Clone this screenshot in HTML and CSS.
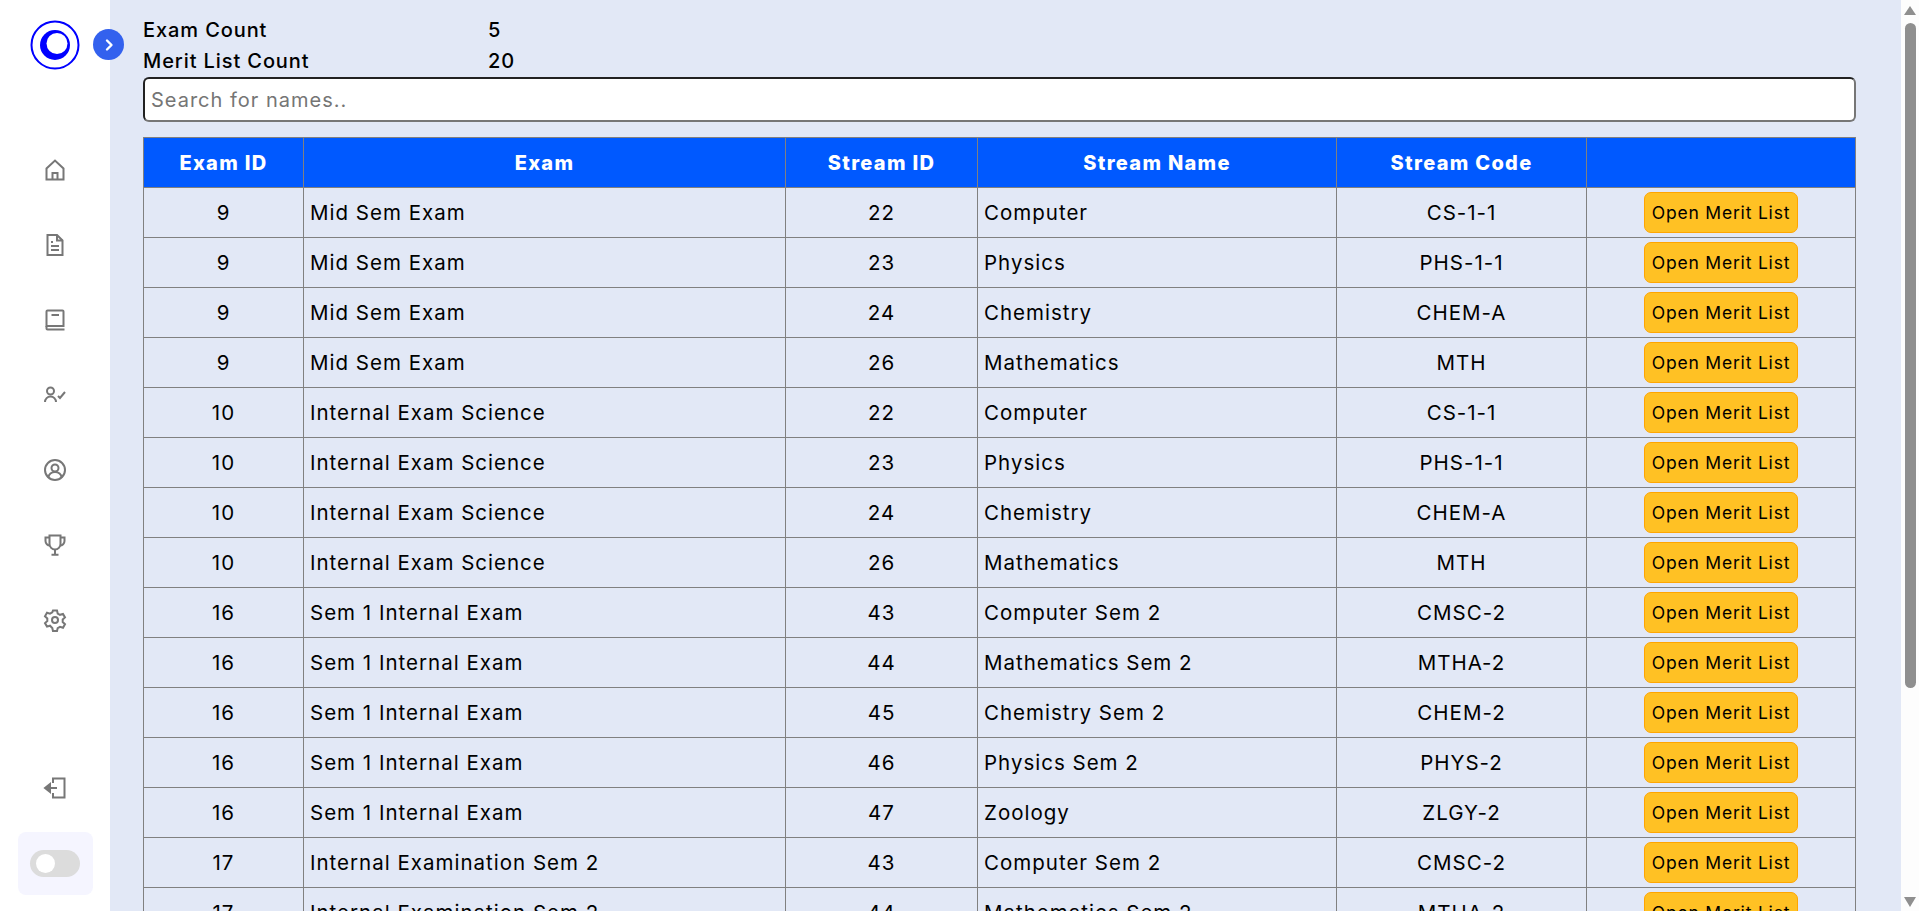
FILE: index.html
```html
<!DOCTYPE html>
<html lang="en">
<head>
    <meta charset="UTF-8">
    <meta name="viewport" content="width=device-width, initial-scale=1.0">
    <title>Merit List</title>
    <link rel="stylesheet" href="styles.css">
</head>
<body>
    <div class="layout">
        <aside class="sidebar">
            <div class="logo">
                <svg width="50" height="50" viewBox="0 0 50 50">
                    <circle cx="25" cy="25" r="23.5" fill="none" stroke="#0000ff" stroke-width="2"/>
                    <circle cx="25" cy="25" r="15" fill="#0000ff"/>
                    <circle cx="27" cy="23.5" r="10.5" fill="#fff"/>
                </svg>
            </div>
            <button class="toggle-btn">
                <svg width="16" height="16" viewBox="0 0 16 16"><path d="M6 3.500 10.500 8 6 12.500" fill="none" stroke="#fff" stroke-width="2.400" stroke-linecap="round" stroke-linejoin="round"/></svg>
            </button>
            <nav class="nav">
                <a class="nav-item"><svg class="icon" viewBox="0 0 24 24"><path d="M3.5 21.5V10.500L12 2.500l8.500 8v11z"/><path d="M9.5 21.500V15h5v6.500"/></svg></a>
                <a class="nav-item"><svg class="icon" viewBox="0 0 24 24"><path d="M4.500 2H14l5.500 5.500V22h-15z"/><path d="M14 2v5.500h5.500"/><path d="M8 9h2M8 13h8M8 17h8"/></svg></a>
                <a class="nav-item"><svg class="icon" viewBox="0 0 24 24"><path d="M3.500 18V3.500a1 1 0 0 1 1-1h15a1 1 0 0 1 1 1V18z"/><path d="M3.500 18v2.500a1 1 0 0 0 1 1h17"/><path d="M8.500 7H16"/></svg></a>
                <a class="nav-item"><svg class="icon" viewBox="0 0 24 24"><circle cx="7.500" cy="8" r="3.500"/><path d="M2 19a5.500 5.500 0 0 1 11 0"/><path d="M15 13l2 2 5-6"/></svg></a>
                <a class="nav-item"><svg class="icon" viewBox="0 0 24 24"><circle cx="12" cy="12" r="10"/><circle cx="12" cy="10" r="3.500"/><path d="M5.500 19.500a6.500 5.500 0 0 1 13 0"/></svg></a>
                <a class="nav-item"><svg class="icon" viewBox="0 0 24 24"><path d="M6.500 2.500h11V11a5.500 5.500 0 0 1-11 0z"/><path d="M6.500 4.500h-4V8A4.500 4.500 0 0 0 7 12.500M17.500 4.500h4V8a4.500 4.500 0 0 1-4.500 4.500"/><path d="M12 16.500v5M8.500 21.800h7"/></svg></a>
                <a class="nav-item"><svg class="icon" viewBox="0 0 24 24"><circle cx="12" cy="12" r="3"/><path d="M10 2.500h4l.7 3 2.300 1.300 3-.9 2 3.500-2.300 2.100v2.600l2.300 2.100-2 3.500-3-.9-2.300 1.300-.7 3h-4l-.7-3L7 17.700l-3 .9-2-3.500 2.300-2.100v-2.600L2 8.300l2-3.500 3 .9 2.300-1.300z"/></svg></a>
            </nav>
            <a class="nav-item logout"><svg class="icon" viewBox="0 0 24 24"><path d="M10 7V2.500h11.500v19H10V17"/><path d="M14 12H6"/><path d="M7 8l-5 4 5 4z" fill="#777"/></svg></a>
            <div class="theme-box">
                <div class="switch"><span class="knob"></span></div>
            </div>
        </aside>
        <main class="content">
            <div class="counts">
                <div class="count-row"><span class="count-label">Exam Count</span><span>5</span></div>
                <div class="count-row"><span class="count-label">Merit List Count</span><span>20</span></div>
            </div>
            <input class="search" type="text" placeholder="Search for names..">
            <table class="merit-table">
                <thead>
                    <tr>
                        <th>Exam ID</th>
                        <th>Exam</th>
                        <th>Stream ID</th>
                        <th>Stream Name</th>
                        <th>Stream Code</th>
                        <th></th>
                    </tr>
                </thead>
                <tbody id="rows"></tbody>
            </table>
        </main>
        <div class="scroll-rail">
            <span class="arrow-up"></span>
            <span class="scroll-thumb"></span>
            <span class="arrow-down"></span>
        </div>
    </div>
    <script>
        const rows = [
            [9, "Mid Sem Exam", 22, "Computer", "CS-1-1"],
            [9, "Mid Sem Exam", 23, "Physics", "PHS-1-1"],
            [9, "Mid Sem Exam", 24, "Chemistry", "CHEM-A"],
            [9, "Mid Sem Exam", 26, "Mathematics", "MTH"],
            [10, "Internal Exam Science", 22, "Computer", "CS-1-1"],
            [10, "Internal Exam Science", 23, "Physics", "PHS-1-1"],
            [10, "Internal Exam Science", 24, "Chemistry", "CHEM-A"],
            [10, "Internal Exam Science", 26, "Mathematics", "MTH"],
            [16, "Sem 1 Internal Exam", 43, "Computer Sem 2", "CMSC-2"],
            [16, "Sem 1 Internal Exam", 44, "Mathematics Sem 2", "MTHA-2"],
            [16, "Sem 1 Internal Exam", 45, "Chemistry Sem 2", "CHEM-2"],
            [16, "Sem 1 Internal Exam", 46, "Physics Sem 2", "PHYS-2"],
            [16, "Sem 1 Internal Exam", 47, "Zoology", "ZLGY-2"],
            [17, "Internal Examination Sem 2", 43, "Computer Sem 2", "CMSC-2"],
            [17, "Internal Examination Sem 2", 44, "Mathematics Sem 2", "MTHA-2"]
        ];
        const tbody = document.getElementById("rows");
        rows.forEach(r => {
            const tr = document.createElement("tr");
            tr.innerHTML = `
                <td class="center">${r[0]}</td>
                <td>${r[1]}</td>
                <td class="center">${r[2]}</td>
                <td>${r[3]}</td>
                <td class="center">${r[4]}</td>
                <td class="center"><button class="open-btn">Open Merit List</button></td>
            `;
            tbody.appendChild(tr);
        });
    </script>
</body>
</html>
```

FILE: styles.css
```css
html, body {
    height: 100%;
    overflow: hidden;
}
body {
    margin: 0;
    font-family: "Inter", "Liberation Sans", sans-serif;
    font-size: 20px;
    letter-spacing: 0.9px;
    color: #000;
    background-color: #fff;
}
.layout {
    display: flex;
    height: 911px;
    overflow: hidden;
}
.sidebar {
    position: relative;
    width: 110px;
    flex-shrink: 0;
    display: flex;
    flex-direction: column;
    align-items: center;
    background-color: #fff;
    z-index: 2;
}
.logo {
    height: 50px;
    margin-top: 20px;
}
.toggle-btn {
    position: absolute;
    top: 29px;
    left: 93px;
    width: 31px;
    height: 31px;
    padding: 0;
    border: none;
    border-radius: 50%;
    background-color: #3361ee;
    display: flex;
    align-items: center;
    justify-content: center;
}
.nav {
    margin-top: 62px;
    display: flex;
    flex-direction: column;
    align-items: center;
}
.nav-item {
    height: 75px;
    display: flex;
    align-items: center;
}
.icon {
    width: 24px;
    height: 24px;
    fill: none;
    stroke: #777;
    stroke-width: 2;
}
.logout {
    margin-top: auto;
    margin-bottom: 7px;
}
.theme-box {
    width: 75px;
    height: 63px;
    margin-bottom: 16px;
    border-radius: 8px;
    background-color: #f5f5ff;
    display: flex;
    align-items: center;
    justify-content: center;
}
.switch {
    width: 50px;
    height: 27px;
    border-radius: 14px;
    background-color: #dcdcdc;
    display: flex;
    align-items: center;
    padding-left: 6px;
    box-sizing: border-box;
}
.knob {
    width: 19px;
    height: 19px;
    border-radius: 50%;
    background-color: #fff;
}
.content {
    flex: 1;
    min-width: 0;
    padding: 14px 45px 0 33px;
    background-color: #e2e8f6;
}
.counts {
    margin-bottom: 1px;
}
.count-row {
    display: flex;
    height: 31px;
    align-items: center;
    font-weight: 500;
}
.count-label {
    width: 345px;
}
.search {
    display: block;
    width: 100%;
    height: 45px;
    box-sizing: border-box;
    margin-bottom: 15px;
    padding: 0 6px;
    font-family: inherit;
    font-size: 20px;
    letter-spacing: 1px;
    border: 2px inset #767676;
    border-radius: 6px;
    background-color: #fff;
}
.merit-table {
    width: 100%;
    border-collapse: collapse;
    table-layout: fixed;
}
.merit-table th,
.merit-table td {
    height: 50px;
    box-sizing: border-box;
    padding: 0 6px;
    border: 1px solid #808080;
    font-size: 20.5px;
    letter-spacing: 1px;
    text-align: left;
}
.merit-table th {
    background-color: #0059ff;
    color: #fff;
    font-size: 20px;
    font-weight: 800;
    letter-spacing: 1.3px;
    text-align: center;
}
.merit-table .center {
    text-align: center;
}
.merit-table th:nth-child(1) { width: 160px; }
.merit-table th:nth-child(2) { width: 482px; }
.merit-table th:nth-child(3) { width: 192px; }
.merit-table th:nth-child(4) { width: 359px; }
.merit-table th:nth-child(5) { width: 250px; }
.open-btn {
    width: 154px;
    height: 41px;
    padding: 0;
    font-family: inherit;
    font-size: 17.5px;
    letter-spacing: 0.8px;
    color: #000;
    background-color: #ffc124;
    border: 1px solid #ffa500;
    border-radius: 7px;
    vertical-align: middle;
}
/* the browser hides its own scrollbar here, so it is drawn */
.scroll-rail {
    width: 18px;
    flex-shrink: 0;
    display: flex;
    flex-direction: column;
    align-items: center;
    background-color: #fdfdfd;
}
.arrow-up {
    margin-top: 6px;
    border-left: 6.5px solid transparent;
    border-right: 6.5px solid transparent;
    border-bottom: 9px solid #8f8f8f;
}
.scroll-thumb {
    width: 11px;
    height: 665px;
    margin-top: 8px;
    border-radius: 6px;
    background-color: #8f8f8f;
}
.arrow-down {
    margin-top: auto;
    margin-bottom: 4px;
    border-left: 6.5px solid transparent;
    border-right: 6.5px solid transparent;
    border-top: 10px solid #8f8f8f;
}
```
